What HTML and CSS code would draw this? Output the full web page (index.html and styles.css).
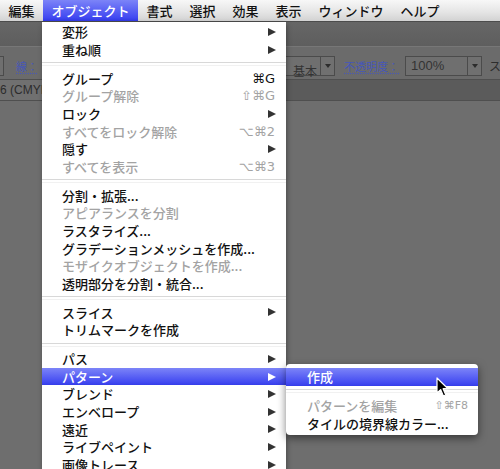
FILE: index.html
```html
<!DOCTYPE html>
<html lang="ja">
<head>
<meta charset="utf-8">
<title>オブジェクト メニュー</title>
<link rel="stylesheet" href="styles.css">
</head>
<body>
<div class="menubar">
  <span class="mb-item">編集</span>
  <span class="mb-item active">オブジェクト</span>
  <span class="mb-item">書式</span>
  <span class="mb-item">選択</span>
  <span class="mb-item">効果</span>
  <span class="mb-item">表示</span>
  <span class="mb-item">ウィンドウ</span>
  <span class="mb-item">ヘルプ</span>
</div>
<div class="toolbar"></div>
<div class="controlbar">
  <span class="field stub"></span>
  <span class="link first">線：</span>
  <span class="field wide"></span>
  <span class="select"><span class="select-text">基本</span></span>
  <span class="drop-btn"><span class="tri"></span></span>
  <span class="link opacity">不透明度：</span>
  <span class="field pct">100%</span>
  <span class="drop-btn"><span class="tri"></span></span>
  <span class="plain">スタ</span>
</div>
<div class="tabstrip">
  <span class="tab">6 (CMYK</span>
</div>

<div class="menu">
  <div class="item"><span>変形</span><span class="arrow"></span></div>
  <div class="item"><span>重ね順</span><span class="arrow"></span></div>
  <div class="sep"></div>
  <div class="item"><span>グループ</span><span class="key">⌘G</span></div>
  <div class="item disabled"><span>グループ解除</span><span class="key">⇧⌘G</span></div>
  <div class="item"><span>ロック</span><span class="arrow"></span></div>
  <div class="item disabled"><span>すべてをロック解除</span><span class="key">⌥⌘2</span></div>
  <div class="item"><span>隠す</span><span class="arrow"></span></div>
  <div class="item disabled"><span>すべてを表示</span><span class="key">⌥⌘3</span></div>
  <div class="sep"></div>
  <div class="item"><span>分割・拡張...</span></div>
  <div class="item disabled"><span>アピアランスを分割</span></div>
  <div class="item"><span>ラスタライズ...</span></div>
  <div class="item"><span>グラデーションメッシュを作成...</span></div>
  <div class="item disabled"><span>モザイクオブジェクトを作成...</span></div>
  <div class="item"><span>透明部分を分割・統合...</span></div>
  <div class="sep"></div>
  <div class="item"><span>スライス</span><span class="arrow"></span></div>
  <div class="item"><span>トリムマークを作成</span></div>
  <div class="sep"></div>
  <div class="item"><span>パス</span><span class="arrow"></span></div>
  <div class="item active"><span>パターン</span><span class="arrow"></span></div>
  <div class="item"><span>ブレンド</span><span class="arrow"></span></div>
  <div class="item"><span>エンベロープ</span><span class="arrow"></span></div>
  <div class="item"><span>遠近</span><span class="arrow"></span></div>
  <div class="item"><span>ライブペイント</span><span class="arrow"></span></div>
  <div class="item"><span>画像トレース</span><span class="arrow"></span></div>
</div>

<div class="submenu">
  <div class="item active"><span>作成</span></div>
  <div class="sep"></div>
  <div class="item disabled"><span>パターンを編集</span><span class="key small">⇧⌘F8</span></div>
  <div class="item"><span>タイルの境界線カラー...</span></div>
</div>

<svg class="cursor" width="14" height="21" viewBox="0 0 14 21">
  <path d="M1 1 L1 16 L4.6 12.6 L7.4 19 L9.8 18 L7.1 11.7 L12 11.7 Z" fill="#000" stroke="#fff" stroke-width="1.2" stroke-linejoin="round"/>
</svg>
</body>
</html>
```
FILE: styles.css
```css
* {
  box-sizing: border-box;
  margin: 0;
  padding: 0;
}

html,
body {
  width: 500px;
  height: 469px;
  overflow: hidden;
}

body {
  position: relative;
  background: #6e6e6e;
  font-family: "Noto Sans CJK JP", "DejaVu Sans", sans-serif;
  color: #111;
}

/* ---------- menu bar ---------- */
.menubar {
  height: 22px;
  display: flex;
  background: linear-gradient(#f7f7f7, #e4e4e4 60%, #d2d2d2);
  border-bottom: 1px solid #4c4c4c;
}

.mb-item {
  padding: 0 8.5px;
  font-size: 13px;
  line-height: 21px;
  font-weight: 500;
  color: #111;
  white-space: nowrap;
}

.mb-item.active {
  background: linear-gradient(#7c84f8, #4048f1 85%, #3139e6);
  color: #fff;
}

/* ---------- background application chrome ---------- */
.toolbar {
  height: 25px;
  background: linear-gradient(#666, #5e5e5e);
  border-bottom: 1px solid #777;
}

.controlbar {
  height: 33px;
  display: flex;
  align-items: flex-start;
  padding-top: 9px;
  background: #6b6b6b;
  border-bottom: 1px solid #4f4f4f;
  white-space: nowrap;
  overflow: hidden;
}

.field {
  height: 20px;
  border: 1px solid #4b4b4b;
  background: #6f6f6f;
  font-family: "DejaVu Sans", sans-serif;
  font-size: 12px;
  line-height: 18px;
  color: #333;
  flex: none;
}

.field.stub {
  width: 4px;
  border-left: none;
}

.field.wide {
  width: 60px;
  margin-left: 6px;
}

.field.pct {
  width: 63px;
  margin-left: 6px;
  padding-left: 5px;
  font-family: "Liberation Sans", sans-serif;
  font-size: 13px;
}

.link {
  font-size: 11px;
  line-height: 20px;
  color: #4657b8;
  text-decoration: underline dotted;
  text-underline-offset: 2px;
  flex: none;
}

.link.first {
  margin-left: 12px;
}

.link.opacity {
  margin-left: 9px;
}

.select {
  margin-left: 171px;
  width: 46px;
  height: 20px;
  border: 1px solid #4b4b4b;
  background: #6f6f6f;
  flex: none;
  text-align: right;
  padding-right: 3px;
}

.select-text {
  font-size: 12px;
  line-height: 18px;
  color: #333;
}

.drop-btn {
  width: 14px;
  height: 20px;
  border: 1px solid #4b4b4b;
  border-left: none;
  background: #707070;
  display: flex;
  align-items: center;
  justify-content: center;
  flex: none;
}

.tri {
  width: 0;
  height: 0;
  border-top: 4px solid #2c2c2c;
  border-left: 3px solid transparent;
  border-right: 3px solid transparent;
}

.plain {
  margin-left: 7px;
  font-size: 12px;
  line-height: 20px;
  color: #2d2d2d;
}

.tabstrip {
  height: 21px;
  background: #5b5b5b;
  border-bottom: 1px solid #4f4f4f;
  display: flex;
  overflow: hidden;
}

.tab {
  width: 42px;
  overflow: hidden;
  background: #707070;
  font-family: "Liberation Sans", "Noto Sans CJK JP", sans-serif;
  font-size: 12px;
  line-height: 20px;
  color: #2c2c2c;
  white-space: nowrap;
}

/* ---------- menus ---------- */
.menu {
  position: absolute;
  left: 42px;
  top: 22px;
  width: 244px;
  height: 470px;
  padding-top: 1.2px;
  background: #fff;
  box-shadow: 1px 2px 5px rgba(0, 0, 0, 0.35);
}

.item {
  height: 17.6px;
  display: flex;
  align-items: center;
  justify-content: space-between;
  padding: 0 10px 0 20px;
  font-size: 13px;
  line-height: 17.6px;
  font-weight: 500;
  color: #111;
  white-space: nowrap;
}

.item.disabled {
  color: #a3a3a3;
}

.item.active {
  background: linear-gradient(#7c84f8, #4149f1 85%, #353de8);
  color: #fff;
}

.arrow {
  width: 0;
  height: 0;
  border-left: 8px solid #333;
  border-top: 4.5px solid transparent;
  border-bottom: 4.5px solid transparent;
}

.item.active .arrow {
  border-left-color: #fff;
}

.key {
  font-family: "DejaVu Sans", sans-serif;
  font-size: 13px;
  font-weight: normal;
  margin-right: 1px;
}

.key.small {
  font-size: 11px;
}

.sep {
  height: 11.4px;
  display: flex;
  align-items: center;
}

.sep::before {
  content: "";
  flex: 1;
  height: 2px;
  border-top: 1px solid #d8d8d8;
  border-bottom: 1px solid #f1f1f1;
}

.submenu {
  position: absolute;
  left: 286px;
  top: 364px;
  width: 192px;
  padding: 4px 0 3px;
  background: #fff;
  border-radius: 4px;
  box-shadow: 0 3px 9px rgba(0, 0, 0, 0.5);
}

.submenu .item {
  padding: 0 9px 0 21px;
}

.cursor {
  position: absolute;
  left: 436px;
  top: 377px;
}
```
